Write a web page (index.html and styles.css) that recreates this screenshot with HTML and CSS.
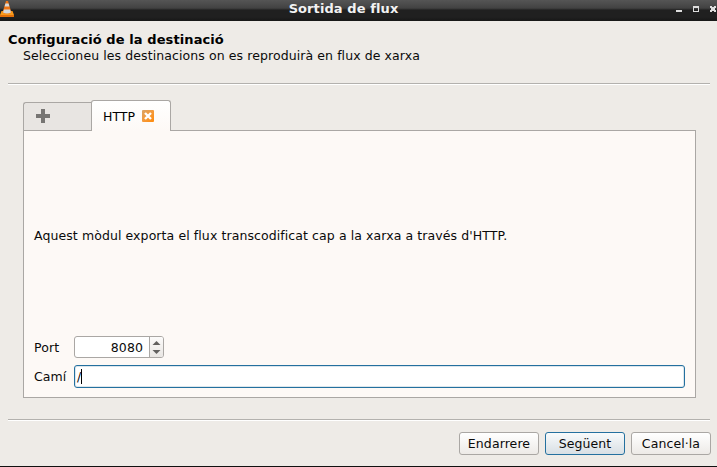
FILE: index.html
```html
<!DOCTYPE html>
<html lang="ca">
<head>
<meta charset="utf-8">
<title>Sortida de flux</title>
<link rel="stylesheet" href="styles.css">
</head>
<body>
<div class="window">
  <header class="titlebar">
    <svg class="cone" viewBox="0 0 14 17" width="14" height="17">
      <path d="M1.500 11h11L14 15v2H0v-2z" fill="#f99a1c"/>
      <path d="M0 15h14v2H0z" fill="#e2700a"/>
      <path d="M6 1h2l3.400 11.500q-4.400 2.500-8.800 0z" fill="#ee7414"/>
      <path d="M5.400 3.500h3.200l.8 3h-4.800zM3.900 9.500h6.200l.9 3q-4 2-8 0z" fill="#d3dadf"/>
    </svg>
    <h1 class="window-title">Sortida de flux</h1>
    <svg class="controls" viewBox="0 0 41 8" width="41" height="8" shape-rendering="crispEdges">
      <path d="M0 5h6v2H0z" fill="#ddd"/>
      <path d="M17 1h6v6h-6zM18 3v3h4V3z" fill="#ddd" fill-rule="evenodd"/>
      <path d="M34 1h2v1h2V1h2v2h-1v2h1v2h-2V6h-2v1h-2V5h1V3h-1z" fill="#ddd"/>
    </svg>
  </header>
  <div class="heading">
    <h2>Configuració de la destinació</h2>
    <p>Seleccioneu les destinacions on es reproduirà en flux de xarxa</p>
  </div>
  <div class="rule"></div>
  <main class="tabs">
    <nav class="tabbar">
      <button class="tab add" aria-label="+">
        <svg viewBox="0 0 14 14" width="14" height="14" shape-rendering="crispEdges"><path d="M5 0h4v5h5v4H9v5H5V9H0V5h5z" fill="#777573"/></svg>
      </button>
      <button class="tab active"><span>HTTP</span>
        <svg viewBox="0 0 12 12" width="12" height="12">
          <defs><linearGradient id="o" x2="1" y2="1"><stop stop-color="#d8a468"/><stop offset=".5" stop-color="#f59a3a"/><stop offset="1" stop-color="#ff8a0a"/></linearGradient></defs>
          <rect width="12" height="12" rx="1" fill="url(#o)"/>
          <path d="M3 3l6 6M9 3L3 9" stroke="#fff" stroke-width="2.400"/>
        </svg>
      </button>
    </nav>
    <section class="panel">
      <p class="description">Aquest mòdul exporta el flux transcodificat cap a la xarxa a través d'HTTP.</p>
      <div class="row port">
        <label>Port</label>
        <div class="spin"><span class="value">8080</span>
          <svg viewBox="0 0 13 20" width="13" height="20"><path d="M2.500 8L6.500 4 10.500 8zM2.500 13L6.500 17 10.500 13z" fill="#62605e"/></svg>
        </div>
      </div>
      <div class="row">
        <label>Camí</label>
        <div class="field"><span>/</span><i class="caret"></i></div>
      </div>
    </section>
  </main>
  <div class="rule"></div>
  <footer class="actions">
    <button class="btn">Endarrere</button>
    <button class="btn primary">Següent</button>
    <button class="btn">Cancel·la</button>
  </footer>
</div>
</body>
</html>
```
FILE: styles.css
```css
* { box-sizing: border-box; margin: 0; }
body {
  font: 12.5px/16px "DejaVu Sans", sans-serif;
  letter-spacing: 0.09px;
  color: #0a0a0a;
  overflow: hidden;
}
.window {
  width: 717px;
  height: 467px;
  display: flex;
  flex-direction: column;
  background: #eeebe7;
  border-bottom: 1px solid #111;
}
svg { display: block; flex: none; }
.titlebar {
  height: 21px;
  flex: none;
  display: grid;
  grid-template-columns: 41px 1fr 41px;
  align-items: start;
  background: linear-gradient(#555 0, #424242 8px, #333 9px, #202020 10px, #202020 17px, #171717 21px);
}
.window-title {
  font-size: 13px;
  line-height: 17px;
  text-align: center;
  color: #f2f2f2;
  padding-right: 30px;
}
.controls { margin-top: 5px; }
.heading { height: 62px; padding: 11px 8px 0; flex: none; }
.heading h2 { font-size: 13px; line-height: 16px; color: #000; }
.heading p { padding-left: 15px; }
.rule {
  height: 2px;
  flex: none;
  margin: 0 7px 0 8px;
  background: #b3b1ae;
  border-bottom: 1px solid #fff;
}
.tabs {
  flex: none;
  height: 334px;
  padding: 15px 21px 0 23px;
}
.tabbar { display: flex; align-items: flex-end; height: 31px; }
.tab {
  display: flex;
  align-items: center;
  font: inherit;
  color: #000;
  border: 1px solid #aaa7a4;
  padding: 0;
}
.add {
  width: 68px;
  height: 29px;
  padding: 0 0 2px 12px;
  border-right: 0;
  border-radius: 3px 0 0 0;
  background: #e8e5e2;
}
.active {
  width: 80px;
  height: 31px;
  gap: 7px;
  padding: 0 0 0 11px;
  border-bottom: 0;
  border-radius: 3px 3px 0 0;
  background: linear-gradient(#fff, #fdf9f6);
  position: relative;
}
.active span { padding-top: 2px; }
.active svg { margin-bottom: 1px; }
.panel {
  height: 268px;
  margin-top: -1px;
  border: 1px solid #aaa7a4;
  background: #fdf9f6;
  padding: 0 10px;
  display: flex;
  flex-direction: column;
}
.description { padding-top: 97px; height: 205px; }
.row { display: flex; align-items: center; height: 23px; }
.row label { width: 40px; flex: none; }
.port { height: 22px; margin-bottom: 7px; }
.port label { padding-top: 1px; }
.spin {
  width: 90px;
  height: 22px;
  display: flex;
  border: 1px solid #aaa7a4;
  border-radius: 3px;
  background: #fff;
  overflow: hidden;
}
.value { flex: 1; text-align: right; padding-right: 6px; line-height: 22px; }
.spin svg { width: 14px; border-left: 1px solid #aaa7a4; background: linear-gradient(#fcfbfa, #e9e6e3); }
.field {
  flex: 1;
  height: 23px;
  display: flex;
  align-items: center;
  padding-left: 2px;
  border: 1px solid #24709f;
  border-radius: 3px;
  background: #fff;
  box-shadow: inset 0 0 0 1px #dce6ec;
}
.field span { width: 4px; }
.caret { width: 1px; height: 15px; background: #000; }
.actions {
  display: flex;
  justify-content: flex-end;
  gap: 6px;
  padding: 11px 6px 0 0;
}
.btn {
  width: 80px;
  height: 23px;
  padding: 0;
  font: inherit;
  letter-spacing: inherit;
  color: #0a0a0a;
  border: 1px solid #aaa7a4;
  border-radius: 3px;
  background: linear-gradient(#fff, #edeae7);
}
.primary {
  border-color: #24709f;
  background: linear-gradient(#f8fafb, #d8dfe4);
}
```
